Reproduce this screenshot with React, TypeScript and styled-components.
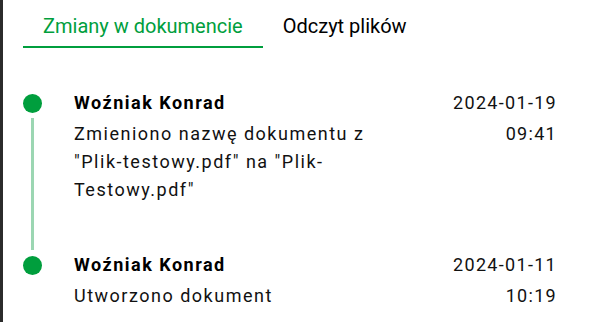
import React from "react";
import styled, { createGlobalStyle } from "styled-components";

const Global = createGlobalStyle`
  html, body { margin: 0; padding: 0; background: #fff; }
  body { font-family: Roboto, "Noto Sans", Arial, sans-serif; }
`;

const Page = styled.div`
  width: 606px;
  height: 322px;
  box-sizing: border-box;
  border-left: 3px solid #2b2b2b;
  overflow: hidden;
  background: #fff;
`;

const Tabs = styled.div`
  display: flex;
  padding-left: 20px;
  height: 48px;
`;

const Tab = styled.div<{ $active?: boolean }>`
  box-sizing: border-box;
  height: 48px;
  padding: 6px 20px 0;
  display: flex;
  align-items: center;
  font-size: 20px;
  color: ${(p) => (p.$active ? "#009e3d" : "#000")};
  border-bottom: 2px solid ${(p) => (p.$active ? "#009e3d" : "transparent")};
`;

const Timeline = styled.div`
  padding: 40px 49px 0 20px;
  display: flex;
  flex-direction: column;
`;

const Item = styled.div<{ $last?: boolean }>`
  display: grid;
  grid-template-columns: 19px 1fr auto;
  column-gap: 32px;
  padding-bottom: ${(p) => (p.$last ? "0" : "46px")};
  position: relative;
`;

const Marker = styled.div`
  grid-row: 1;
  grid-column: 1;
  display: flex;
  flex-direction: column;
  align-items: center;
`;

const Dot = styled.div`
  width: 19px;
  height: 19px;
  border-radius: 50%;
  background: #009e3d;
  margin-top: 6px;
`;

const Connector = styled.div`
  position: absolute;
  left: 8px;
  width: 3px;
  top: 30px;
  bottom: 0;
  background: #9bd6b2;
`;

const Content = styled.div`
  letter-spacing: 1.5px;
`;

const Name = styled.div`
  font-size: 18px;
  font-weight: 700;
  line-height: 30px;
  color: #000;
`;

const Desc = styled.div`
  font-size: 18px;
  line-height: 28px;
  padding-top: 2px;
  color: #111;
  max-width: 320px;
`;

const Time = styled.div`
  text-align: right;
  font-size: 18px;
  color: #111;
  letter-spacing: 1.3px;
`;

const DateLine = styled.div`
  line-height: 30px;
`;
const HourLine = styled.div`
  line-height: 28px;
  padding-top: 2px;
`;

const items = [
  {
    name: "Woźniak Konrad",
    desc: 'Zmieniono nazwę dokumentu z "Plik-testowy.pdf" na "Plik-Testowy.pdf"',
    date: "2024-01-19",
    time: "09:41",
  },
  {
    name: "Woźniak Konrad",
    desc: "Utworzono dokument",
    date: "2024-01-11",
    time: "10:19",
  },
];

export default function App() {
  return (
    <>
      <Global />
      <Page>
        <Tabs>
          <Tab $active>Zmiany w dokumencie</Tab>
          <Tab>Odczyt plików</Tab>
        </Tabs>
        <Timeline>
          {items.map((it, i) => {
            const last = i === items.length - 1;
            return (
              <Item key={i} $last={last}>
                <Marker>
                  <Dot />
                </Marker>
                {!last && <Connector />}
                <Content>
                  <Name>{it.name}</Name>
                  <Desc>{it.desc}</Desc>
                </Content>
                <Time>
                  <DateLine>{it.date}</DateLine>
                  <HourLine>{it.time}</HourLine>
                </Time>
              </Item>
            );
          })}
        </Timeline>
      </Page>
    </>
  );
}
